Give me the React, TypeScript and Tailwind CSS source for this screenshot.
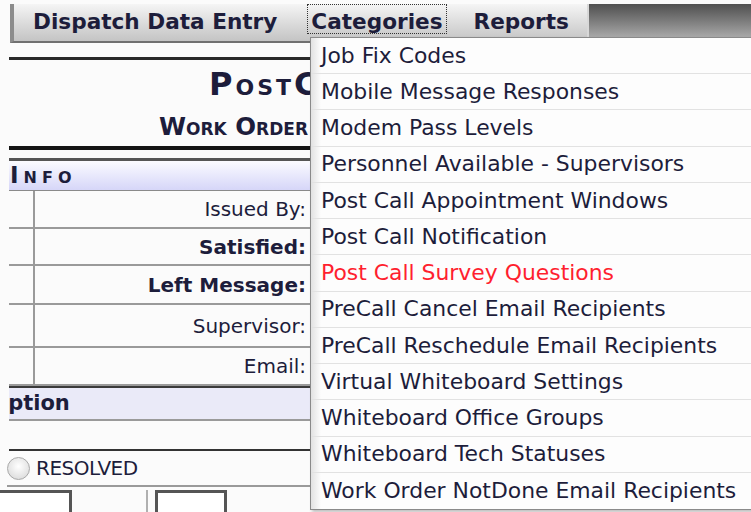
import React from 'react'

const categories = [
  'Job Fix Codes',
  'Mobile Message Responses',
  'Modem Pass Levels',
  'Personnel Available - Supervisors',
  'Post Call Appointment Windows',
  'Post Call Notification',
  'Post Call Survey Questions',
  'PreCall Cancel Email Recipients',
  'PreCall Reschedule Email Recipients',
  'Virtual Whiteboard Settings',
  'Whiteboard Office Groups',
  'Whiteboard Tech Statuses',
  'Work Order NotDone Email Recipients',
]

const infoRows = [
  { label: 'Issued By:', bold: false, h: 'h-[38px]' },
  { label: 'Satisfied:', bold: true, h: 'h-[37px]' },
  { label: 'Left Message:', bold: true, h: 'h-[39px]' },
  { label: 'Supervisor:', bold: false, h: 'h-[43px]' },
  { label: 'Email:', bold: false, h: 'h-[38px]' },
]

function MenuBar() {
  return (
    <div className="pt-[4px] pl-[10px]">
      <div className="flex h-[39px] border-b-2 border-l-4 border-b-[#707070] border-l-[#8c8c8c]">
        <div className="flex w-[573px] items-start bg-gradient-to-b from-[#f5f5f5] to-[#c4c4c4] text-[21.6px] font-bold leading-[35px]">
          <span className="pl-[19px] pr-[30px]">Dispatch Data Entry</span>
          <span className="h-[30px] border border-dotted border-[#333] px-[3px] leading-[33px]">Categories</span>
          <span className="pl-[27px]">Reports</span>
        </div>
        <div className="flex-1 border-l-2 border-[#d8d8d8] bg-gradient-to-b from-[#505050] to-[#b4b4b4]" />
      </div>
    </div>
  )
}

function CategoriesMenu() {
  return (
    <div className="absolute left-[310px] top-[37px] w-[460px] border border-[#8a8a8a] bg-[linear-gradient(to_right,#e2e2e2,#fdfdfd_10px)] shadow-[2px_2px_3px_rgba(0,0,0,0.25)]">
      <div className="grid h-[471px] grid-rows-13">
        {categories.map((c) => (
          <div
            key={c}
            className={`flex items-center border-b border-[#e2e2e2] pl-[10px] pt-[1px] text-[21.9px] whitespace-nowrap last:border-b-0 ${
              c === 'Post Call Survey Questions' ? 'text-[#ff1f2f]' : 'text-[#1d1d3b]'
            }`}
          >
            {c}
          </div>
        ))}
      </div>
    </div>
  )
}

export default function App() {
  return (
    <div
      className="relative h-[512px] w-[751px] overflow-hidden bg-[#fbfbfb] text-[#1d1d3b]"
      style={{ fontFamily: 'Tahoma, "DejaVu Sans", sans-serif' }}
    >
      <MenuBar />

      <div className="pl-[9px]">
        <div className="mt-[14px] h-[3px] bg-[#2a2a2a]" />

        {/* form title, the rest of it sits under the open menu */}
        <div className="h-[86px] w-[301px] overflow-hidden">
          <div className="pt-[6px] pl-[200px] text-[32px] font-bold leading-[36px] tracking-[3px] whitespace-nowrap [font-variant:small-caps]">
            PostCall Survey
          </div>
          <div className="pt-[12px] pl-[150px] text-[24.5px] font-bold leading-[26px] whitespace-nowrap [font-variant:small-caps]">
            Work Order #
          </div>
        </div>
        <div className="h-[4px] bg-[#141414]" />
        <div className="h-[8px]" />

        {/* info section */}
        <div className="h-[33px] border-t-[3px] border-b border-t-[#555] border-b-[#8a8a8a] bg-gradient-to-b from-[#fbfbff] to-[#d6d6f8] pl-[1px] text-[23px] font-bold leading-[29px] tracking-[5px] [font-variant:small-caps]">
          Info
        </div>
        {infoRows.map((r) => (
          <div key={r.label} className={`grid grid-cols-[26px_275px_1fr] border-b-2 border-[#9a9a9a] ${r.h}`}>
            <div className="border-r-2 border-[#9a9a9a]" />
            <div
              className={`flex items-center justify-end pr-[4px] text-[20px] whitespace-nowrap ${
                r.bold ? 'font-bold' : ''
              }`}
            >
              {r.label}
            </div>
            <div />
          </div>
        ))}

        {/* description section */}
        <div className="h-[35px] overflow-hidden border-t-2 border-b-2 border-t-[#3a3a3a] border-b-[#9a9a9a] bg-[#eaeaf8] text-[21px] font-bold leading-[30px] whitespace-nowrap">
          <span className="-ml-[75px]">Description</span>
        </div>
        <div className="h-[30px] border-b-2 border-[#333]" />
        <div className="flex h-[36px] items-center gap-[6px] border-b-2 border-[#9a9a9a] -ml-[2px] whitespace-nowrap">
          <span className="h-[23px] w-[23px] rounded-full border border-[#a8a8a8] bg-[radial-gradient(circle_at_50%_40%,#ffffff,#d4d4d4)]" />
          <span className="text-[20px] tracking-[-0.5px]">RESOLVED</span>
        </div>
        <div className="flex h-[30px] pt-[3px]">
          <div className="ml-[-9px] h-[40px] w-[72px] border-t-[3px] border-r-[3px] border-[#555] bg-white" />
          <div className="ml-[74px] h-[40px] border-l-2 border-[#b0b0b0]" />
          <div className="ml-[7px] h-[40px] w-[72px] border-t-[3px] border-r-[3px] border-l-[3px] border-[#555] bg-white" />
        </div>
      </div>

      <CategoriesMenu />
    </div>
  )
}
